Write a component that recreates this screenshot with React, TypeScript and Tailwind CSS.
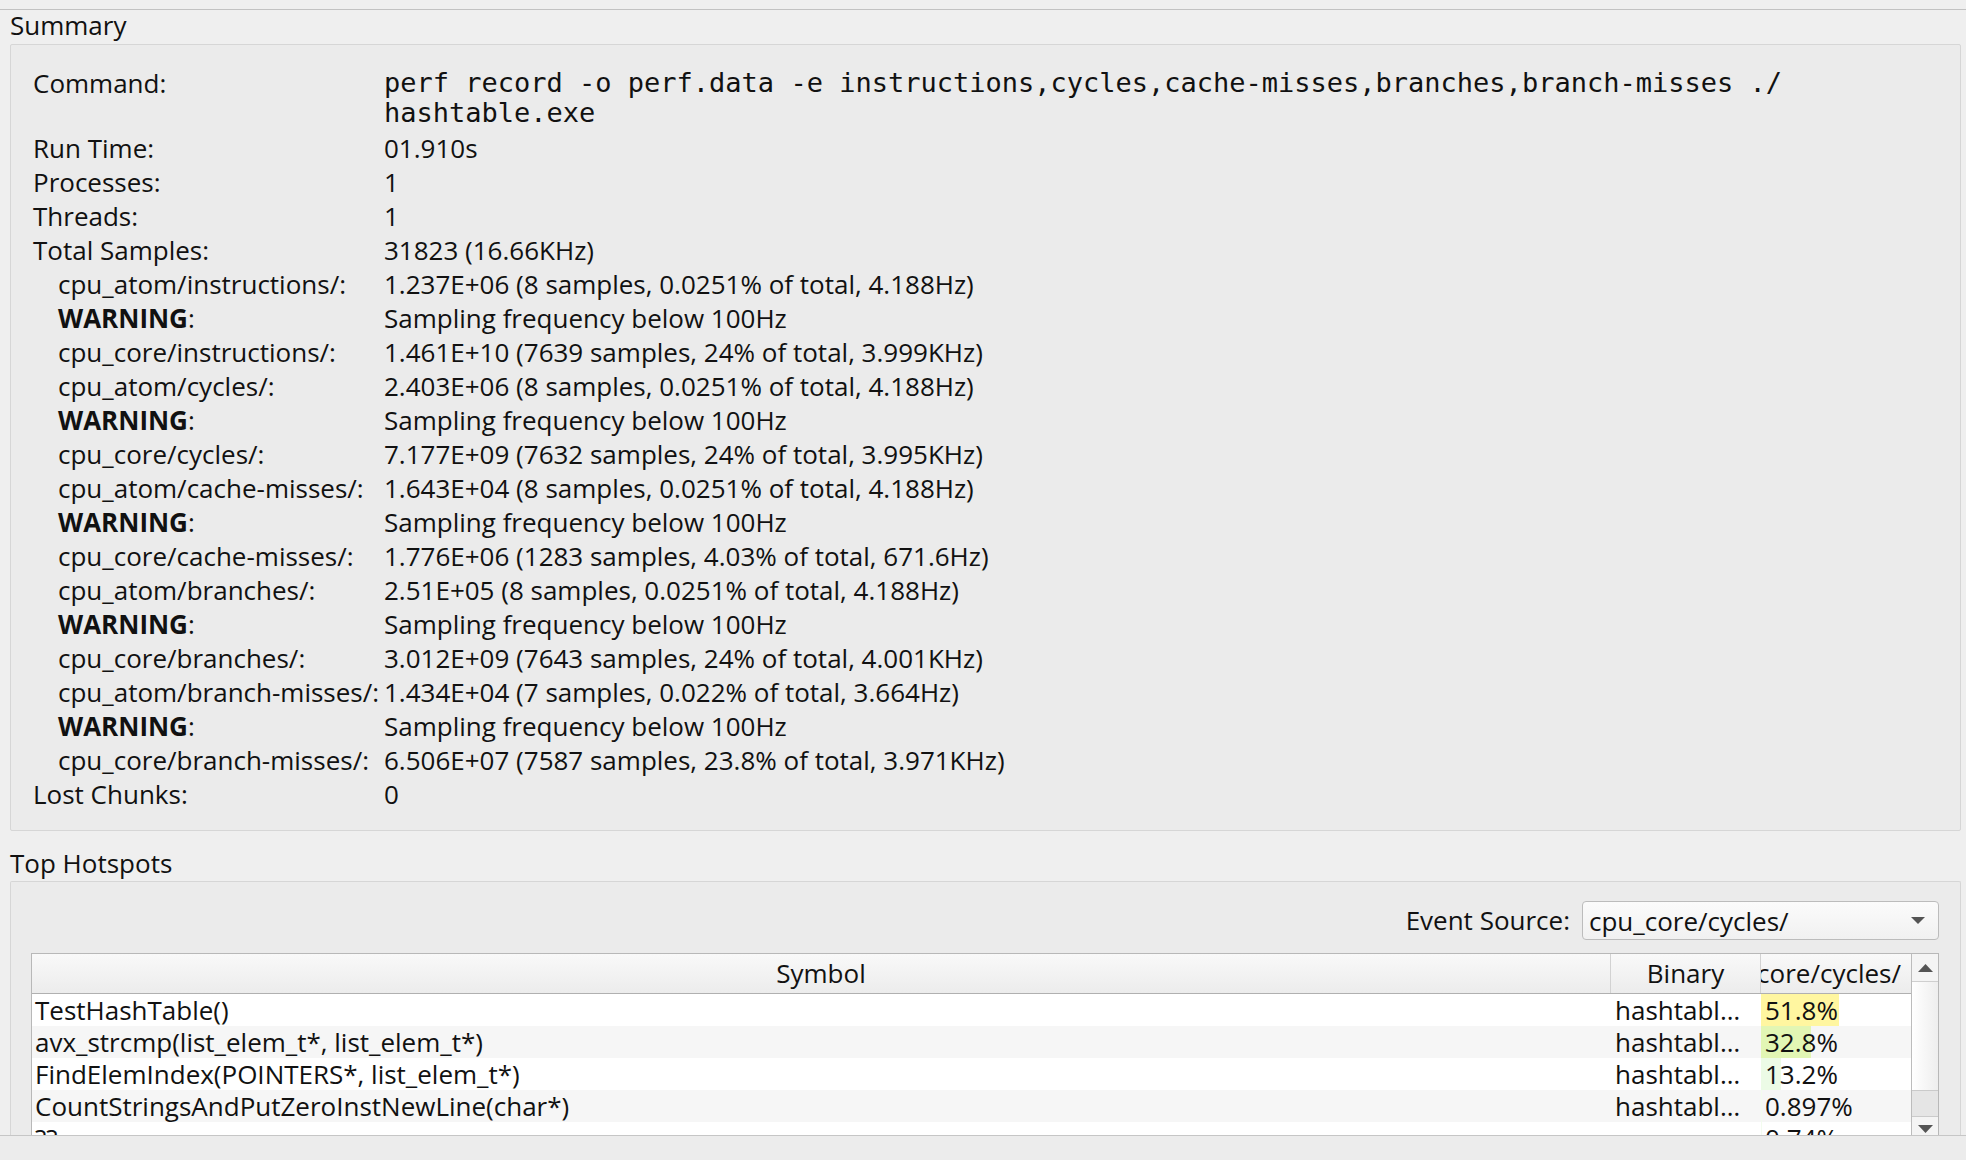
import React from 'react';

type EventRow = { label: string; value: string; warn?: boolean };

const events: EventRow[] = [
  { label: 'cpu_atom/instructions/:', value: '1.237E+06 (8 samples, 0.0251% of total, 4.188Hz)', warn: true },
  { label: 'cpu_core/instructions/:', value: '1.461E+10 (7639 samples, 24% of total, 3.999KHz)' },
  { label: 'cpu_atom/cycles/:', value: '2.403E+06 (8 samples, 0.0251% of total, 4.188Hz)', warn: true },
  { label: 'cpu_core/cycles/:', value: '7.177E+09 (7632 samples, 24% of total, 3.995KHz)' },
  { label: 'cpu_atom/cache-misses/:', value: '1.643E+04 (8 samples, 0.0251% of total, 4.188Hz)', warn: true },
  { label: 'cpu_core/cache-misses/:', value: '1.776E+06 (1283 samples, 4.03% of total, 671.6Hz)' },
  { label: 'cpu_atom/branches/:', value: '2.51E+05 (8 samples, 0.0251% of total, 4.188Hz)', warn: true },
  { label: 'cpu_core/branches/:', value: '3.012E+09 (7643 samples, 24% of total, 4.001KHz)' },
  { label: 'cpu_atom/branch-misses/:', value: '1.434E+04 (7 samples, 0.022% of total, 3.664Hz)', warn: true },
  { label: 'cpu_core/branch-misses/:', value: '6.506E+07 (7587 samples, 23.8% of total, 3.971KHz)' },
];

const hotspots = [
  { symbol: 'TestHashTable()', binary: 'hashtabl…', pct: 51.8, text: '51.8%', bar: 'bg-[#fff6a0]' },
  { symbol: 'avx_strcmp(list_elem_t*, list_elem_t*)', binary: 'hashtabl…', pct: 32.8, text: '32.8%', bar: 'bg-[#e2f6b4]' },
  { symbol: 'FindElemIndex(POINTERS*, list_elem_t*)', binary: 'hashtabl…', pct: 13.2, text: '13.2%', bar: 'bg-[#ecfbe6]' },
  { symbol: 'CountStringsAndPutZeroInstNewLine(char*)', binary: 'hashtabl…', pct: 0.897, text: '0.897%', bar: 'bg-[#f3fcef]' },
  { symbol: '??', binary: '', pct: 0.74, text: '0.74%', bar: 'bg-[#f3fcef]' },
];

function Row({ label, children, indent }: { label: React.ReactNode; children: React.ReactNode; indent?: boolean }) {
  return (
    <>
      <div className={indent ? 'pl-[25px] whitespace-nowrap' : 'whitespace-nowrap'}>{label}</div>
      <div className="whitespace-nowrap">{children}</div>
    </>
  );
}

function Triangle({ up }: { up?: boolean }) {
  return (
    <svg width="15" height="8" viewBox="0 0 15 8">
      <polygon points={up ? '0,8 15,8 7.5,0' : '0,0 15,0 7.5,8'} fill="#545454" />
    </svg>
  );
}

export default function App() {
  return (
    <div className="w-[1966px] h-[1160px] bg-[#efefef] text-[#111] font-['Open_Sans',sans-serif] text-[26px] overflow-hidden flex flex-col">
      <div className="h-[10px] shrink-0 border-b border-[#c2c2c2]" />

      <div className="flex-1 min-h-0 flex flex-col px-[10px] pr-[5px]">
        <div className="h-[34px] leading-[30px] shrink-0">Summary</div>

        <div className="shrink-0 border border-[#d6d6d6] rounded-[2px] bg-[#ebebeb] pt-[23px] pb-[19px] pl-[22px]">
          <div className="grid grid-cols-[351px_1fr] leading-[34px]">
            <div className="leading-[30px] mb-[3px]">Command:</div>
            <div className="leading-[30px] mb-[3px] font-['DejaVu_Sans_Mono',monospace] text-[27px] whitespace-nowrap">
              perf record -o perf.data -e instructions,cycles,cache-misses,branches,branch-misses ./
              <br />
              hashtable.exe
            </div>
            <Row label="Run Time:">01.910s</Row>
            <Row label="Processes:">1</Row>
            <Row label="Threads:">1</Row>
            <Row label="Total Samples:">31823 (16.66KHz)</Row>
            {events.map((e) => (
              <React.Fragment key={e.label}>
                <Row label={e.label} indent>
                  {e.value}
                </Row>
                {e.warn && (
                  <Row
                    indent
                    label={
                      <>
                        <span className="font-bold">WARNING</span>:
                      </>
                    }
                  >
                    Sampling frequency below 100Hz
                  </Row>
                )}
              </React.Fragment>
            ))}
            <Row label="Lost Chunks:">0</Row>
          </div>
        </div>

        <div className="h-[50px] pt-[17px] leading-[30px] shrink-0">Top Hotspots</div>

        <div className="flex-1 min-h-0 overflow-hidden border border-b-0 border-[#d6d6d6] rounded-t-[2px] bg-[#ebebeb] pt-[19px] pl-[20px] pr-[21px] flex flex-col">
          <div className="flex items-center justify-end gap-[12px] shrink-0">
            <span>Event Source:</span>
            <div className="w-[357px] h-[39px] rounded-[4px] border border-[#bcbcbc] bg-gradient-to-b from-[#fbfbfb] to-[#f1f1f1] flex items-center justify-between pl-[6px] pr-[13px]">
              <span className="leading-[30px]">cpu_core/cycles/</span>
              <svg width="14" height="7" viewBox="0 0 14 7">
                <polygon points="0,0 14,0 7,7" fill="#545454" />
              </svg>
            </div>
          </div>

          <div className="mt-[13px] flex-1 min-h-0 flex border border-b-0 border-[#b8b8b8] bg-white">
            <div className="flex-1 min-w-0 flex flex-col">
              <div className="grid grid-cols-[1579px_150px_151px] h-[40px] shrink-0 border-b border-[#b0b0b0] bg-gradient-to-b from-[#f9f9f9] to-[#ececec]">
                <div className="flex items-center justify-center border-r border-[#d2d2d2]">Symbol</div>
                <div className="flex items-center justify-center border-r border-[#d2d2d2]">Binary</div>
                <div className="flex items-center justify-end pr-[11px] overflow-hidden whitespace-nowrap">cpu_core/cycles/</div>
              </div>
              <div className="flex-1 min-h-0 overflow-hidden">
                {hotspots.map((h, i) => (
                  <div
                    key={h.symbol}
                    className={`grid grid-cols-[1579px_150px_151px] h-[32px] leading-[32px] ${i % 2 ? 'bg-[#f6f6f6]' : 'bg-white'}`}
                  >
                    <div className="pl-[3px] whitespace-nowrap overflow-hidden">{h.symbol}</div>
                    <div className="pl-[4px] whitespace-nowrap overflow-hidden">{h.binary}</div>
                    <div className="relative pl-[4px] whitespace-nowrap overflow-hidden">
                      <div className={`absolute left-0 top-0 bottom-0 ${h.bar}`} style={{ width: `${h.pct}%` }} />
                      <span className="relative">{h.text}</span>
                    </div>
                  </div>
                ))}
              </div>
            </div>

            <div className="w-[27px] shrink-0 border-l border-[#bcbcbc] flex flex-col bg-[#f7f7f7]">
              <div className="h-[28px] shrink-0 border-b border-[#cfcfcf] flex items-center justify-center bg-[#f4f4f4]">
                <Triangle up />
              </div>
              <div className="h-[108px] shrink-0 bg-gradient-to-r from-white to-[#eeeeee]" />
              <div className="h-[27px] shrink-0 border-y border-[#cacaca] bg-[#e5e5e5]" />
              <div className="flex-1 flex items-start justify-center pt-[8px] bg-[#f4f4f4]">
                <Triangle />
              </div>
            </div>
          </div>
        </div>
      </div>

      <div className="h-[25px] shrink-0 border-t border-[#c6c6c6] bg-[#ececec]" />
    </div>
  );
}
